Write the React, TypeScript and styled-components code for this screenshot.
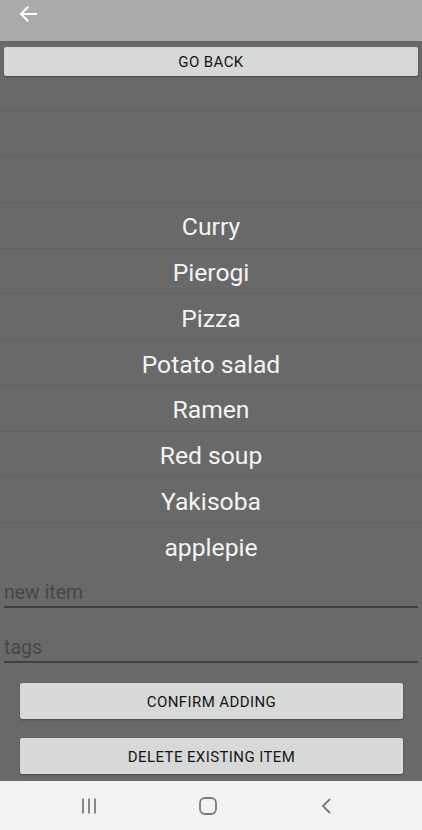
import React from "react";
import styled, { createGlobalStyle } from "styled-components";

const Global = createGlobalStyle`
  html, body { margin: 0; padding: 0; }
  body { font-family: Roboto, "Noto Sans", sans-serif; background: #696969; }
  * { box-sizing: border-box; }
`;

const Page = styled.div`
  width: 422px;
  height: 830px;
  display: flex;
  flex-direction: column;
  overflow: hidden;
`;

const Header = styled.header`
  height: 41px;
  flex: none;
  background: #aaaaaa;
  display: flex;
  align-items: flex-start;
  padding: 5px 0 0 18px;
`;

const Main = styled.main`
  flex: 1;
  min-height: 0;
  background: #696969;
  display: flex;
  flex-direction: column;
`;

const Button = styled.button<{ $wide?: boolean }>`
  flex: none;
  height: ${(p) => (p.$wide ? "29px" : "36px")};
  margin: ${(p) => (p.$wide ? "6px 4px 0" : "0 19px 0 20px")};
  border: none;
  border-radius: 2px;
  background: #d7d8d8;
  box-shadow: 0 1px 2px rgba(0, 0, 0, 0.35);
  color: #151515;
  font-family: Roboto, sans-serif;
  font-weight: 400;
  font-size: 15px;
  letter-spacing: 0.4px;
  text-transform: uppercase;
  display: flex;
  align-items: center;
  justify-content: center;
  padding: 1px 0 0;
`;

const List = styled.div`
  flex: none;
  height: 489px;
  margin-top: 4px;
  overflow: hidden;
  display: flex;
  flex-direction: column;
  justify-content: flex-end;
`;

const Row = styled.div`
  flex: none;
  height: 45.78px;
  display: flex;
  align-items: center;
  justify-content: center;
  padding-top: 3px;
  color: #f4f4f4;
  font-size: 24.7px;
  border-bottom: 1px solid #616161;
  &:last-child { border-bottom: none; }
`;

const Field = styled.div<{ $gap: number }>`
  flex: none;
  height: 38px;
  margin: ${(p) => p.$gap}px 4px 0;
  border-bottom: 2px solid #3f3f3f;
  display: flex;
  align-items: flex-end;
  padding-bottom: 2px;
  font-size: 19.5px;
  line-height: 23px;
  color: #474747;
`;

const Actions = styled.div`
  display: flex;
  flex-direction: column;
  gap: 19px;
  margin-top: 20px;
`;

const NavBar = styled.nav`
  height: 49px;
  flex: none;
  background: #f2f2f2;
  display: flex;
  align-items: center;
  justify-content: center;
  gap: 101px;
  padding: 0 6px 0 0;
`;

const NavIcon = styled.svg`
  width: 18px;
  height: 18px;
  display: block;
`;

const items = ["", "", "", "Curry", "Pierogi", "Pizza", "Potato salad", "Ramen", "Red soup", "Yakisoba", "applepie"];

export default function App() {
  return (
    <Page>
      <Global />
      <Header>
        <svg width="20" height="18" viewBox="0 0 20 18">
          <path d="M18 9H3M9.5 2.5L3 9l6.5 6.5" stroke="#fff" strokeWidth="2" fill="none" strokeLinecap="square" />
        </svg>
      </Header>
      <Main>
        <Button $wide>Go back</Button>
        <List>
          {items.map((t, i) => (
            <Row key={i}>{t}</Row>
          ))}
        </List>
        <Field $gap={1}>new item</Field>
        <Field $gap={17}>tags</Field>
        <Actions>
          <Button>Confirm adding</Button>
          <Button>Delete existing item</Button>
        </Actions>
      </Main>
      <NavBar>
        <NavIcon viewBox="0 0 18 18">
          <path d="M3 1.5v15M9 1.5v15M15 1.5v15" stroke="#7a7a7a" strokeWidth="1.8" />
        </NavIcon>
        <NavIcon viewBox="0 0 18 18">
          <rect x="1" y="1" width="16" height="16" rx="5" stroke="#7a7a7a" strokeWidth="1.8" fill="none" />
        </NavIcon>
        <NavIcon viewBox="0 0 18 18">
          <path d="M12 2L5 9l7 7" stroke="#7a7a7a" strokeWidth="1.8" fill="none" />
        </NavIcon>
      </NavBar>
    </Page>
  );
}
